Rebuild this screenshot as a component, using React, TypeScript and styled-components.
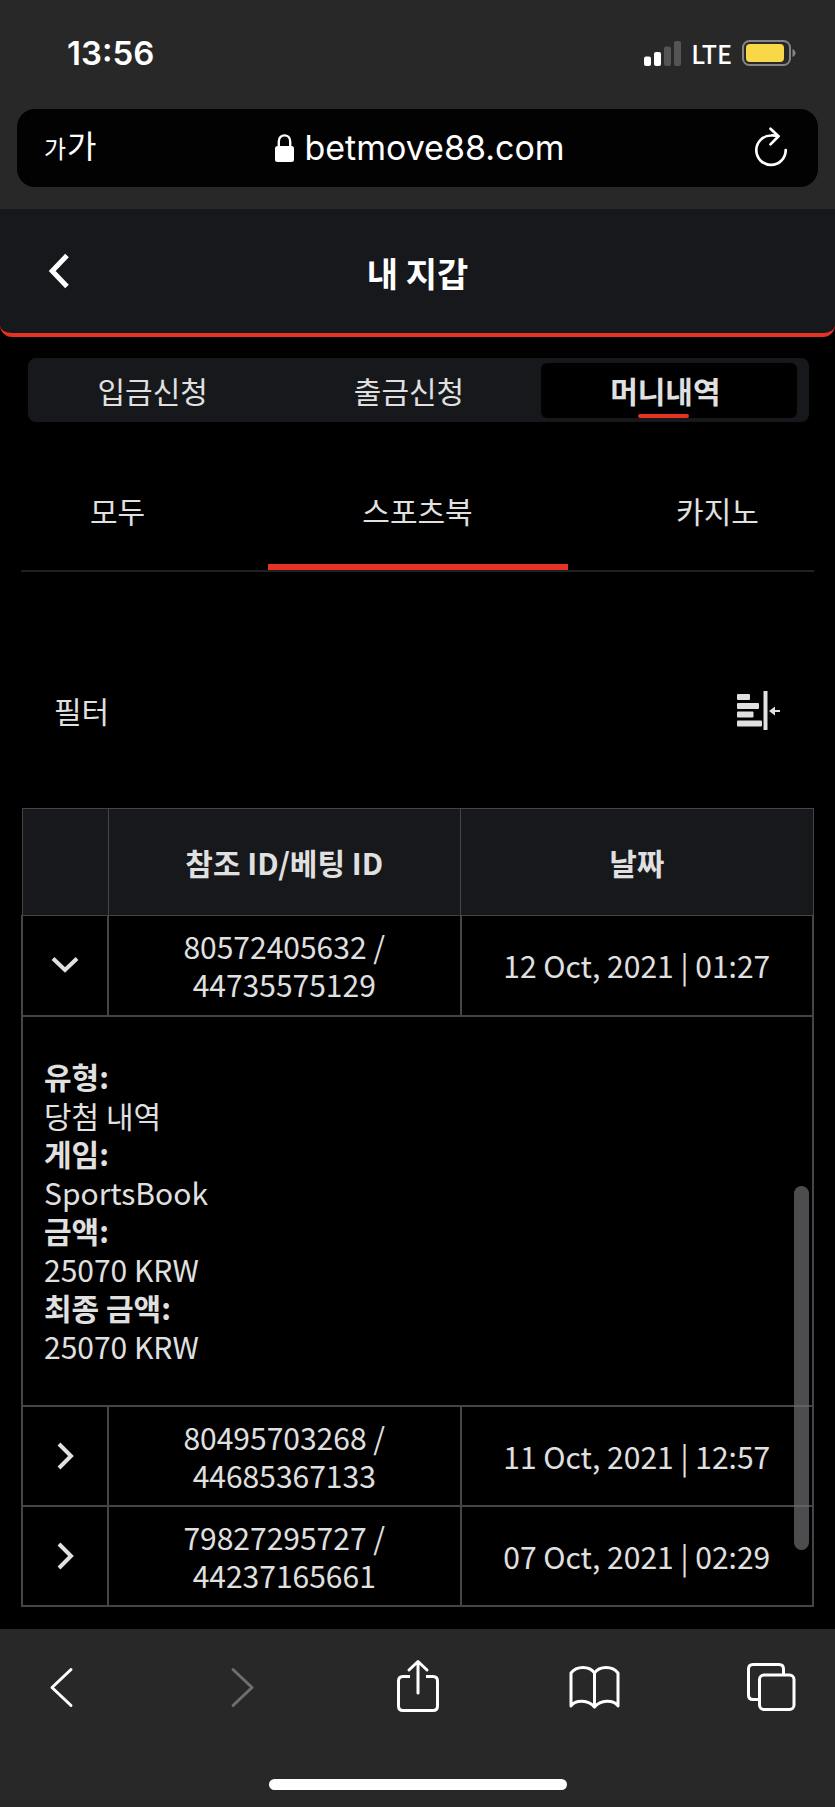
import React, { Fragment, useState } from "react";
import styled, { createGlobalStyle } from "styled-components";

const color = {
  chrome: "#282828",
  panel: "#17181c",
  accent: "#e63224",
  text: "#e0e0e0",
  line: "#454547",
};

const GlobalStyle = createGlobalStyle`
  *, *::before, *::after { box-sizing: border-box; }
  body {
    margin: 0;
    background: #000;
    color: ${color.text};
    font-family: "Noto Sans CJK KR", "Noto Sans", sans-serif;
    font-size: 30px;
    line-height: 38px;
  }
  button {
    margin: 0;
    padding: 0;
    border: 0;
    background: none;
    color: inherit;
    font: inherit;
    cursor: pointer;
  }
  svg { display: block; }
`;

const Screen = styled.div`
  display: flex;
  flex-direction: column;
  min-height: 100vh;
`;

const BrowserTop = styled.header`
  padding: 0 17px 22px;
  background: ${color.chrome};
  color: #fff;
  font-family: Inter, "Noto Sans CJK KR", sans-serif;
`;

const StatusBar = styled.div`
  display: flex;
  align-items: center;
  justify-content: space-between;
  height: 109px;
  padding: 0 22px 3px 50px;
`;

const Clock = styled.time`
  font-size: 33px;
  font-weight: 600;
`;

const StatusIcons = styled.div`
  display: flex;
  align-items: center;
  gap: 10px;
`;

const Network = styled.span`
  font-family: "Noto Sans CJK KR", sans-serif;
  font-size: 25px;
  font-weight: 500;
`;

const AddressBar = styled.div`
  display: grid;
  grid-template-columns: 1fr auto 1fr;
  align-items: center;
  height: 78px;
  padding: 0 30px 0 27px;
  border-radius: 18px;
  background: #020202;
`;

const TextSizeButton = styled.button`
  display: flex;
  align-items: baseline;
  justify-self: start;
  gap: 1px;
  font-size: 32px;
`;

const SmallGlyph = styled.span`
  font-size: 24px;
`;

const Address = styled.button`
  display: flex;
  align-items: center;
  gap: 10px;
  padding-left: 8px;
  font-size: 34px;
`;

const ReloadButton = styled.button`
  justify-self: end;
`;

const Page = styled.main`
  position: relative;
  flex: 1;
  padding-bottom: 22px;
`;

const TitleBar = styled.div`
  display: grid;
  grid-template-columns: 1fr auto 1fr;
  align-items: center;
  height: 128px;
  padding: 0 48px;
  border-bottom: 4px solid ${color.accent};
  border-radius: 0 0 12px 12px;
  background: ${color.panel};
  color: #fff;
`;

const BackButton = styled.button`
  justify-self: start;
`;

const Title = styled.h1`
  margin: 0;
  padding-top: 4px;
  font-size: 34px;
  font-weight: 700;
`;

const Segments = styled.nav`
  display: grid;
  grid-template-columns: repeat(3, 1fr);
  height: 64px;
  margin: 21px 26px 0 28px;
  padding: 5px 12px 4px 0;
  border-radius: 8px;
  background: ${color.panel};
`;

const Segment = styled.button<{ $active: boolean }>`
  position: relative;
  padding: 0 7px 2px 0;
  border-radius: 6px;
  background: ${(p) => (p.$active ? "#000" : "transparent")};
  font-weight: ${(p) => (p.$active ? 700 : 400)};

  &::after {
    content: "";
    display: ${(p) => (p.$active ? "block" : "none")};
    position: absolute;
    bottom: 0;
    left: 38%;
    width: 20%;
    height: 4px;
    border-radius: 2px;
    background: ${color.accent};
  }
`;

const Tabs = styled.nav`
  display: flex;
  justify-content: center;
  margin: 32px 21px 0;
  border-bottom: 2px solid #1e1f27;
  overflow: hidden;
`;

const Tab = styled.button<{ $active: boolean }>`
  flex: 0 0 300px;
  height: 116px;
  padding-top: 2px;
  border-bottom: 6px solid ${(p) => (p.$active ? color.accent : "transparent")};
`;

const FilterRow = styled.div`
  display: flex;
  align-items: center;
  justify-content: space-between;
  height: 236px;
  padding: 40px 54px 0;
`;

const History = styled.table`
  width: calc(100% - 42px);
  margin: 0 21px;
  border-collapse: collapse;
  table-layout: fixed;
`;

const ToggleCol = styled.col`
  width: 86px;
`;

const HeadCell = styled.th`
  height: 107px;
  padding: 0;
  border: 1px solid ${color.line};
  background: ${color.panel};
  font-weight: 700;
`;

const Cell = styled.td`
  height: 100px;
  padding: 0 40px;
  border: 2px solid ${color.line};
  border-top: 0;
  text-align: center;
`;

const ToggleCell = styled(Cell)`
  padding: 0;
`;

const DateCell = styled(Cell)`
  padding: 0;
  white-space: nowrap;
`;

const Toggle = styled.button`
  display: flex;
  align-items: center;
  justify-content: center;
  width: 100%;
  height: 60px;
`;

const DetailCell = styled.td`
  padding: 40px 21px;
  border: 2px solid ${color.line};
`;

const Details = styled.dl`
  margin: 0;
`;

const Term = styled.dt`
  font-weight: 700;
  line-height: 39px;
`;

const Value = styled.dd`
  margin: 0;
`;

const ScrollThumb = styled.div`
  position: absolute;
  right: 26px;
  bottom: 79px;
  width: 15px;
  height: 364px;
  border-radius: 8px;
  background: rgba(110, 110, 113, 0.7);
`;

const BrowserBottom = styled.footer`
  display: flex;
  flex-direction: column;
  align-items: center;
  justify-content: space-between;
  height: 178px;
  padding: 30px 39px 17px;
  background: ${color.chrome};
  color: #fff;
`;

const Toolbar = styled.nav`
  display: flex;
  justify-content: space-between;
  width: 100%;
`;

const ToolButton = styled.button`
  display: flex;
  align-items: center;
  justify-content: center;
  width: 52px;
  height: 56px;

  &:disabled { color: #6e6e6e; }
`;

const HomeIndicator = styled.div`
  width: 298px;
  height: 11px;
  border-radius: 6px;
  background: #fff;
`;

const SignalIcon = () => (
  <svg width="37" height="25" viewBox="0 0 37 25" fill="#fff" aria-hidden="true">
    <rect x="0" y="15.500" width="7" height="9.500" rx="2" />
    <rect x="10" y="11" width="7" height="14" rx="2" />
    <rect x="20" y="5.500" width="7" height="19.500" rx="2" fill="#545454" />
    <rect x="30" y="0" width="7" height="25" rx="2" fill="#545454" />
  </svg>
);

const BatteryIcon = () => (
  <svg width="54" height="26" viewBox="0 0 54 26" aria-hidden="true">
    <rect x="1" y="1" width="47" height="24" rx="6.500" fill="none" stroke="#858585" strokeWidth="2" />
    <rect x="4" y="4" width="38" height="18" rx="4" fill="#f8d748" />
    <path d="M50.500 9 C54.500 10.500 54.500 15.500 50.500 17 Z" fill="#858585" />
  </svg>
);

const LockIcon = () => (
  <svg width="19" height="28" viewBox="0 0 19 28" aria-hidden="true">
    <path d="M3.800 13 V7.500 C3.800 -0.700 15.200 -0.700 15.200 7.500 V13" fill="none" stroke="#fff" strokeWidth="2.400" />
    <rect x="0" y="12" width="19" height="16" rx="2.500" fill="#fff" />
  </svg>
);

const ReloadIcon = () => (
  <svg width="34" height="42" viewBox="0 0 34 42" fill="none" stroke="#fff" strokeWidth="2.700" strokeLinecap="round" strokeLinejoin="round" aria-hidden="true">
    <path d="M31.700 23 A14.700 14.700 0 1 1 17 8.500 Q20.500 8.200 24 9.200" />
    <path d="M16.500 1.700 L24.500 9.300 L16.500 17.400" />
  </svg>
);

const BackIcon = () => (
  <svg width="22" height="36" viewBox="0 0 22 36" fill="none" stroke="#fff" strokeWidth="5" aria-hidden="true">
    <path d="M19 2.500 L4.200 18 L19 33.500" />
  </svg>
);

const FilterIcon = () => (
  <svg width="44" height="39" viewBox="0 0 44 39" fill={color.text} aria-hidden="true">
    <rect x="0" y="3" width="13" height="6" rx="1" />
    <rect x="0" y="12" width="22" height="6" rx="1" />
    <rect x="0" y="20.500" width="16.500" height="6" rx="1" />
    <rect x="0" y="29.500" width="25" height="6" rx="1" />
    <rect x="26.500" y="0" width="4" height="39" />
    <path d="M32 20 L38 15.500 V19 H43 V21 H38 V24.500 Z" />
  </svg>
);

const Chevron = ({ open }: { open: boolean }) => (
  <svg width="28" height="28" viewBox="0 0 28 28" fill="none" stroke={color.text} strokeWidth="4" aria-hidden="true">
    <path d={open ? "M2 7.500 L14 19 L26 7.500" : "M8 2 L20 14 L8 26"} />
  </svg>
);

const ToolIcon = ({ name }: { name: string }) => (
  <svg width="52" height="56" viewBox="0 0 52 56" fill="none" stroke="currentColor" strokeWidth="3" strokeLinecap="round" strokeLinejoin="round" aria-hidden="true">
    {name === "back" && <path d="M32 10.500 L13 28.500 L32 46.500" />}
    {name === "forward" && <path d="M18 10.500 L37 28.500 L18 46.500" />}
    {name === "share" && (
      <>
        <path d="M18 17.500 H11 Q6.500 17.500 6.500 22 V47 Q6.500 51.500 11 51.500 H41 Q45.500 51.500 45.500 47 V22 Q45.500 17.500 41 17.500 H34" strokeLinecap="butt" />
        <path d="M26 34 V3 M17 11 L26 2.500 L35 11" />
      </>
    )}
    {name === "bookmarks" && (
      <path d="M26.500 14 C21.500 6.500 8.500 6.500 3 14 V47 C7.500 40.500 20.500 40.500 26.500 48 C32.500 40.500 45.500 40.500 50 47 V14 C44.500 6.500 31.500 6.500 26.500 14 V47" />
    )}
    {name === "tabs" && (
      <>
        <path d="M14 40.500 H9 Q4.500 40.500 4.500 36 V10 Q4.500 5.500 9 5.500 H35 Q39.500 5.500 39.500 10 V15" strokeLinecap="butt" />
        <rect x="15.500" y="16" width="34.500" height="34.500" rx="4.500" />
      </>
    )}
  </svg>
);

const tools = [
  { name: "back", label: "뒤로" },
  { name: "forward", label: "앞으로" },
  { name: "share", label: "공유" },
  { name: "bookmarks", label: "책갈피" },
  { name: "tabs", label: "탭" },
];

const segments = ["입금신청", "출금신청", "머니내역"];
const tabs = ["모두", "스포츠북", "카지노"];

const rows = [
  {
    ids: "80572405632 / 44735575129",
    date: "12 Oct, 2021 | 01:27",
    details: [
      ["유형:", "당첨 내역"],
      ["게임:", "SportsBook"],
      ["금액:", "25070 KRW"],
      ["최종 금액:", "25070 KRW"],
    ],
  },
  { ids: "80495703268 / 44685367133", date: "11 Oct, 2021 | 12:57", details: [] },
  { ids: "79827295727 / 44237165661", date: "07 Oct, 2021 | 02:29", details: [] },
];

export default function App() {
  const [segment, setSegment] = useState(2);
  const [tab, setTab] = useState(1);
  const [openRow, setOpenRow] = useState(0);

  return (
    <Screen>
      <GlobalStyle />
      <BrowserTop>
        <StatusBar>
          <Clock>13:56</Clock>
          <StatusIcons>
            <SignalIcon />
            <Network>LTE</Network>
            <BatteryIcon />
          </StatusIcons>
        </StatusBar>
        <AddressBar>
          <TextSizeButton>
            <SmallGlyph>가</SmallGlyph>가
          </TextSizeButton>
          <Address>
            <LockIcon />
            betmove88.com
          </Address>
          <ReloadButton aria-label="새로고침">
            <ReloadIcon />
          </ReloadButton>
        </AddressBar>
      </BrowserTop>

      <Page>
        <TitleBar>
          <BackButton aria-label="뒤로">
            <BackIcon />
          </BackButton>
          <Title>내 지갑</Title>
        </TitleBar>

        <Segments>
          {segments.map((label, i) => (
            <Segment key={label} $active={i === segment} onClick={() => setSegment(i)}>
              {label}
            </Segment>
          ))}
        </Segments>

        <Tabs>
          {tabs.map((label, i) => (
            <Tab key={label} $active={i === tab} onClick={() => setTab(i)}>
              {label}
            </Tab>
          ))}
        </Tabs>

        <FilterRow>
          <span>필터</span>
          <button aria-label="필터 열기">
            <FilterIcon />
          </button>
        </FilterRow>

        <History>
          <colgroup>
            <ToggleCol />
            <col />
            <col />
          </colgroup>
          <thead>
            <tr>
              <HeadCell />
              <HeadCell scope="col">참조 ID/베팅 ID</HeadCell>
              <HeadCell scope="col">날짜</HeadCell>
            </tr>
          </thead>
          <tbody>
            {rows.map((row, i) => (
              <Fragment key={row.ids}>
                <tr>
                  <ToggleCell>
                    <Toggle
                      aria-label="상세 내역"
                      aria-expanded={i === openRow}
                      onClick={() => setOpenRow(i === openRow ? -1 : i)}
                    >
                      <Chevron open={i === openRow} />
                    </Toggle>
                  </ToggleCell>
                  <Cell>{row.ids}</Cell>
                  <DateCell>{row.date}</DateCell>
                </tr>
                {i === openRow && row.details.length > 0 && (
                  <tr>
                    <DetailCell colSpan={3}>
                      <Details>
                        {row.details.map(([term, value]) => (
                          <Fragment key={term}>
                            <Term>{term}</Term>
                            <Value>{value}</Value>
                          </Fragment>
                        ))}
                      </Details>
                    </DetailCell>
                  </tr>
                )}
              </Fragment>
            ))}
          </tbody>
        </History>
        <ScrollThumb />
      </Page>

      <BrowserBottom>
        <Toolbar>
          {tools.map(({ name, label }) => (
            <ToolButton key={name} aria-label={label} disabled={name === "forward"}>
              <ToolIcon name={name} />
            </ToolButton>
          ))}
        </Toolbar>
        <HomeIndicator />
      </BrowserBottom>
    </Screen>
  );
}
